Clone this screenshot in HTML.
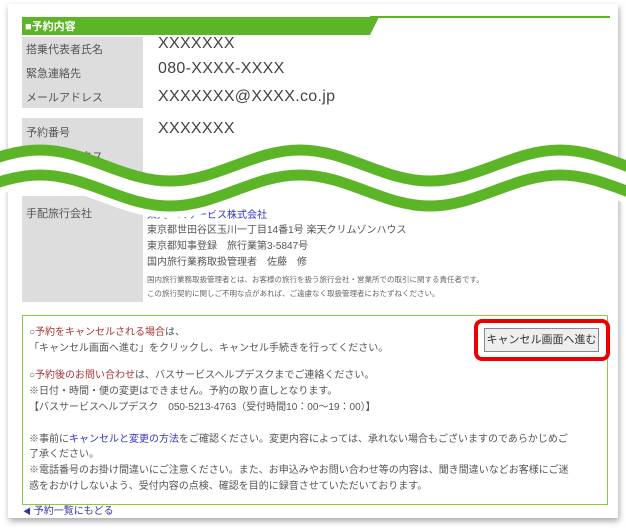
<!DOCTYPE html>
<html><head><meta charset="utf-8"><style>
*{margin:0;padding:0;box-sizing:border-box}
body{width:626px;height:531px;background:#fff;position:relative;overflow:hidden;font-family:"Liberation Sans","Noto Sans CJK JP",sans-serif;color:#555}
.card{position:absolute;left:8px;top:4px;width:610px;height:514px;background:#fff;box-shadow:1px 3px 6px rgba(0,0,0,.35)}
.a{position:absolute;white-space:nowrap}
.lab{font-size:11px;color:#555}
.val{font-size:16px;color:#444;font-weight:300;letter-spacing:.3px}
.g{position:absolute;background:#ddd;left:22px;width:121px}
.t{font-size:10px;color:#555}
.s{font-size:7.5px;color:#666}
.r{color:#a33}
.b{color:#33c}
</style></head><body>
<div class="card"></div>
<svg class="a" style="left:0;top:0" width="626" height="40">
<polygon points="22,17 379,17 370,35 22,35" fill="#5bb526"/>
<rect x="370" y="16" width="240" height="2" fill="#5bb526"/>
</svg>
<div class="a" style="left:25px;top:18px;font-size:11px;font-weight:bold;color:#fff">■予約内容</div>
<div class="g" style="top:37px;height:71px"></div>
<div class="g" style="top:118px;height:60px"></div>
<div class="g" style="top:196px;height:106px"></div>
<div class="a lab" style="left:26px;top:41px">搭乗代表者氏名</div>
<div class="a lab" style="left:26px;top:65px">緊急連絡先</div>
<div class="a lab" style="left:26px;top:89px">メールアドレス</div>
<div class="a lab" style="left:26px;top:124px">予約番号</div>
<div class="a lab" style="left:26px;top:148px">予約ステータス</div>
<div class="a val" style="left:158px;top:35px">XXXXXXX</div>
<div class="a val" style="left:158px;top:60px">080-XXXX-XXXX</div>
<div class="a val" style="left:158px;top:88px">XXXXXXX@XXXX.co.jp</div>
<div class="a val" style="left:158px;top:120px">XXXXXXX</div>
<div class="a lab" style="left:26px;top:205px">手配旅行会社</div>
<div class="a t b" style="left:147px;top:206px">楽天バスサービス株式会社</div>
<div class="a t" style="left:147px;top:221px">東京都世田谷区玉川一丁目14番1号 楽天クリムゾンハウス</div>
<div class="a t" style="left:147px;top:237px">東京都知事登録　旅行業第3-5847号</div>
<div class="a t" style="left:147px;top:253px">国内旅行業務取扱管理者　佐藤　修</div>
<div class="a s" style="left:147px;top:274px">国内旅行業務取扱管理者とは、お客様の旅行を扱う旅行会社・営業所での取引に関する責任者です。</div>
<div class="a s" style="left:147px;top:288px">この旅行契約に関しご不明な点があれば、ご遠慮なく取扱管理者におたずねください。</div>
<svg class="a" style="left:0;top:120px" width="626" height="120" viewBox="0 120 626 120">
<path d="M-90,181 C-43,181 -7,150 40,150 C87,150 123,181 170,181 C217,181 253,150 300,150 C347,150 383,181 430,181 C477,181 513,150 560,150 C607,150 643,181 690,181 L690,206 C643,206 607,175 560,175 C513,175 477,206 430,206 C383,206 347,175 300,175 C253,175 217,206 170,206 C123,206 87,175 40,175 C-7,175 -43,206 -90,206 Z" fill="#fff"/>
<path fill="none" stroke="#fff" stroke-width="24" d="M-90,206 C-43,206 -7,175 40,175 C87,175 123,206 170,206 C217,206 253,175 300,175 C347,175 383,206 430,206 C477,206 513,175 560,175 C607,175 643,206 690,206"/>
<g fill="none" stroke="#5bb526" stroke-width="11">
<path d="M-90,181 C-43,181 -7,150 40,150 C87,150 123,181 170,181 C217,181 253,150 300,150 C347,150 383,181 430,181 C477,181 513,150 560,150 C607,150 643,181 690,181"/>
<path d="M-90,206 C-43,206 -7,175 40,175 C87,175 123,206 170,206 C217,206 253,175 300,175 C347,175 383,206 430,206 C477,206 513,175 560,175 C607,175 643,206 690,206"/>
</g></svg>
<div class="a" style="left:22px;top:315px;width:586px;height:190px;border:1px solid #8c4"></div>
<div class="a t" style="left:29px;top:323px">○<span class="r">予約をキャンセルされる場合</span>は、</div>
<div class="a t" style="left:29px;top:339px">「キャンセル画面へ進む」をクリックし、キャンセル手続きを行ってください。</div>
<div class="a t" style="left:29px;top:366px">○<span class="r">予約後のお問い合わせ</span>は、バスサービスヘルプデスクまでご連絡ください。</div>
<div class="a t" style="left:29px;top:382px">※日付・時間・便の変更はできません。予約の取り直しとなります。</div>
<div class="a t" style="left:29px;top:398px">【バスサービスヘルプデスク　050-5213-4763（受付時間10：00～19：00）】</div>
<div class="a t" style="left:29px;top:430px">※事前に<span class="b">キャンセルと変更の方法</span>をご確認ください。変更内容によっては、承れない場合もございますのであらかじめご</div>
<div class="a t" style="left:29px;top:445px">了承ください。</div>
<div class="a t" style="left:29px;top:461px">※電話番号のお掛け間違いにご注意ください。また、お申込みやお問い合わせ等の内容は、聞き間違いなどお客様にご迷</div>
<div class="a t" style="left:29px;top:477px">惑をおかけしないよう、受付内容の点検、確認を目的に録音させていただいております。</div>
<div class="a" style="left:474px;top:319px;width:136px;height:42px;border:4px solid #e00;border-radius:8px"></div>
<div class="a" style="left:484px;top:328px;width:115px;height:24px;border:1px solid #888;background:#eee;font-size:11px;color:#333;text-align:center;line-height:22px">キャンセル画面へ進む</div>
<div class="a" style="left:23px;top:502px;font-size:10px;color:#33a"><span style="font-size:8px">◀</span> 予約一覧にもどる</div>
</body></html>
